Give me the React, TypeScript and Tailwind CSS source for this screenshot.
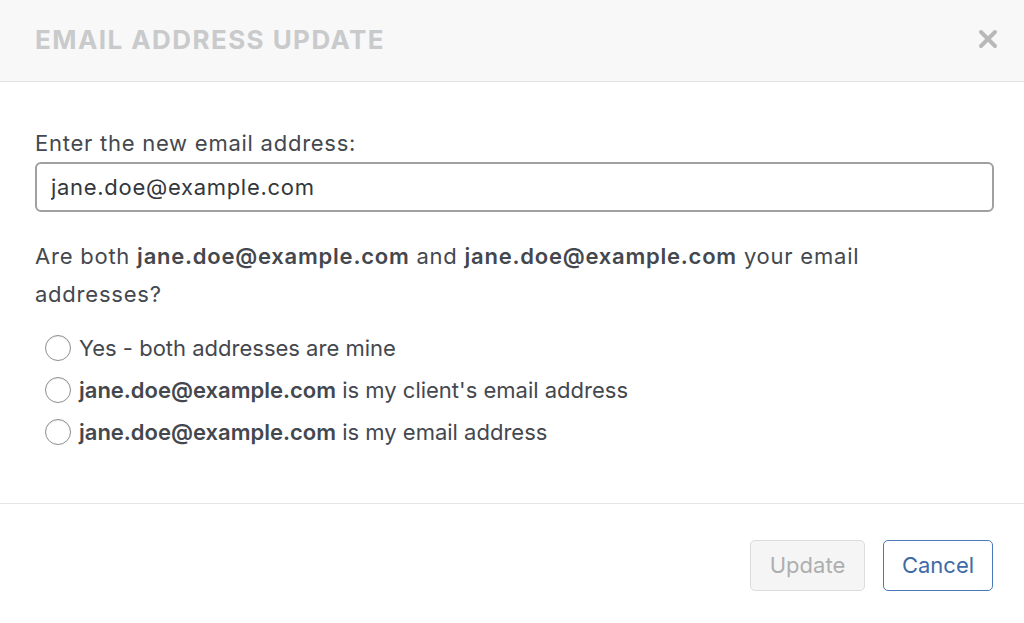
import { useState } from "react";

const EMAIL = "jane.doe@example.com";

function Radio({ checked, onClick }: { checked: boolean; onClick: () => void }) {
  return (
    <button
      type="button"
      onClick={onClick}
      className="w-[26px] h-[26px] rounded-full border-[1.5px] border-[#8e8e8e] bg-white shrink-0 flex items-center justify-center shadow-[inset_0_1px_1px_rgba(0,0,0,0.08)]"
    >
      {checked && <span className="w-[11px] h-[11px] rounded-full bg-[#3e6aa8]" />}
    </button>
  );
}

export default function App() {
  const [choice, setChoice] = useState<number | null>(null);
  const options = [
    <>Yes - both addresses are mine</>,
    <>
      <strong className="font-semibold">{EMAIL}</strong> is my client's email address
    </>,
    <>
      <strong className="font-semibold">{EMAIL}</strong> is my email address
    </>,
  ];

  return (
    <div className="w-[1024px] h-[623px] bg-white flex flex-col text-[#44484e] font-['Inter',sans-serif]">
      {/* Header */}
      <div className="h-[82px] bg-[#f8f8f8] border-b border-[#e3e3e3] flex items-center justify-between pl-[35px] pr-[26px] pb-[3px] shrink-0">
        <h1 className="text-[26px] font-bold tracking-[0.055em] text-[#c9cacc] uppercase">Email Address Update</h1>
        <button type="button" className="text-[#b9b9b9]">
          <svg width="20" height="20" viewBox="0 0 20 20">
            <path d="M3 3L17 17M17 3L3 17" stroke="currentColor" strokeWidth="4" strokeLinecap="round" />
          </svg>
        </button>
      </div>

      {/* Body */}
      <div className="flex-1 px-[35px] pt-[49px] text-[22px]">
        <label className="block leading-[24px] tracking-[0.034em]">Enter the new email address:</label>
        <input
          type="text"
          defaultValue={EMAIL}
          className="mt-[7px] w-[959px] h-[50px] rounded-[6px] border-2 border-[#a0a0a0] px-[14px] text-[22px] tracking-[0.032em] text-[#33373c] outline-none"
        />
        <p className="mt-[25px] leading-[38px] tracking-[0.035em]">
          Are both <strong className="font-semibold">{EMAIL}</strong> and{" "}
          <strong className="font-semibold">{EMAIL}</strong> your email addresses?
        </p>
        <div className="mt-[22px] pl-[10px] flex flex-col gap-[16px]">
          {options.map((o, i) => (
            <label key={i} className="flex items-center gap-[8px] leading-[26px] cursor-pointer">
              <Radio checked={choice === i} onClick={() => setChoice(i)} />
              <span>{o}</span>
            </label>
          ))}
        </div>
      </div>

      {/* Footer */}
      <div className="h-[120px] border-t border-[#e6e6e6] flex items-center justify-end gap-[18px] pr-[31px] pt-[4px] shrink-0">
        <button
          type="button"
          disabled={choice === null}
          className="h-[51px] w-[115px] rounded-[5px] border border-[#dcdcdc] bg-[#f5f5f5] text-[22px] text-[#aeaeae]"
        >
          Update
        </button>
        <button
          type="button"
          className="h-[51px] w-[110px] rounded-[5px] border-[1.5px] border-[#4b78b6] bg-white text-[22px] text-[#3e6aa8]"
        >
          Cancel
        </button>
      </div>
    </div>
  );
}
